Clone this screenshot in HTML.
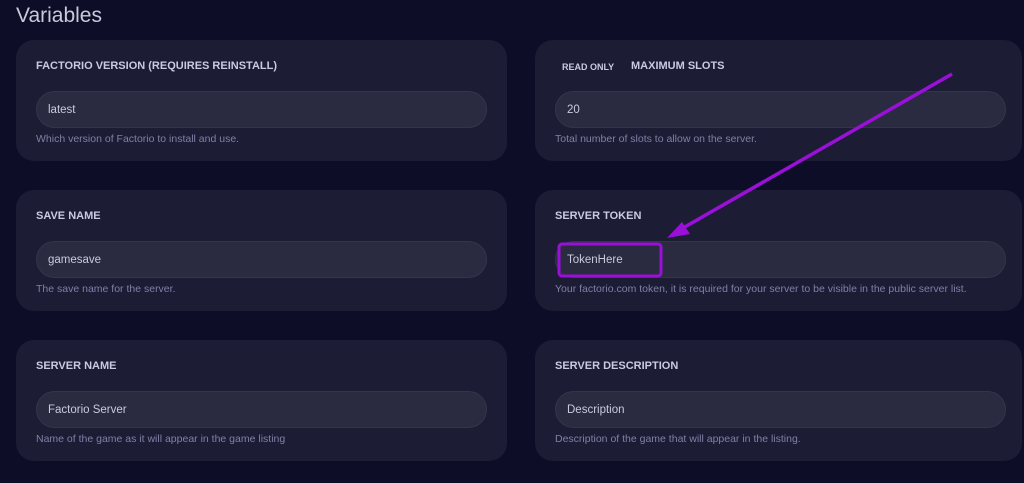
<!DOCTYPE html>
<html><head><style>
body{margin:0;width:1024px;height:483px;background:#0d0d27;font-family:"Liberation Sans",sans-serif;position:relative;overflow:hidden}
h1{position:absolute;left:16px;top:4px;margin:0;font-weight:400;font-size:21px;color:#c8cadc}
.card{position:absolute;width:491px;height:121px;background:#1c1c35;border-radius:18px}
.lab{position:absolute;left:20px;top:20px;font-size:11px;font-weight:700;color:#c9cbe0}
.inp{position:absolute;left:20px;top:51px;width:451px;height:37px;background:#2a2a40;border:1px solid #34344c;border-radius:19px;box-sizing:border-box;padding-left:11px;line-height:37px;font-size:11.5px;color:#c9cbdc}
.help{position:absolute;left:20px;top:93px;font-size:10.5px;color:#7f80a6}
</style></head><body>
<h1>Variables</h1>
<div class="card" style="left:16px;top:40px"><div class="lab">FACTORIO VERSION (REQUIRES REINSTALL)</div><div class="inp">latest</div><div class="help">Which version of Factorio to install and use.</div></div>
<div class="card" style="left:535px;top:40px;width:487px"><div class="lab" style="left:27px;font-size:9px;top:22px">READ ONLY</div><div class="lab" style="left:96px">MAXIMUM SLOTS</div><div class="inp">20</div><div class="help">Total number of slots to allow on the server.</div></div>
<div class="card" style="left:16px;top:190px"><div class="lab">SAVE NAME</div><div class="inp">gamesave</div><div class="help">The save name for the server.</div></div>
<div class="card" style="left:535px;top:190px;width:487px"><div class="lab">SERVER TOKEN</div><div class="inp">TokenHere</div><div class="help">Your factorio.com token, it is required for your server to be visible in the public server list.</div></div>
<div class="card" style="left:16px;top:340px"><div class="lab">SERVER NAME</div><div class="inp">Factorio Server</div><div class="help">Name of the game as it will appear in the game listing</div></div>
<div class="card" style="left:535px;top:340px;width:487px"><div class="lab">SERVER DESCRIPTION</div><div class="inp">Description</div><div class="help">Description of the game that will appear in the listing.</div></div>
<svg style="position:absolute;left:0;top:0" width="1024" height="483">
<rect x="559" y="244" width="102" height="32" rx="3" fill="none" stroke="#9a10d8" stroke-width="3"/>
<line x1="952" y1="74" x2="676" y2="232" stroke="#9a10d8" stroke-width="3.5"/>
<polygon points="667,238 682,222 690,234" fill="#9a10d8"/>
</svg>
</body></html>
